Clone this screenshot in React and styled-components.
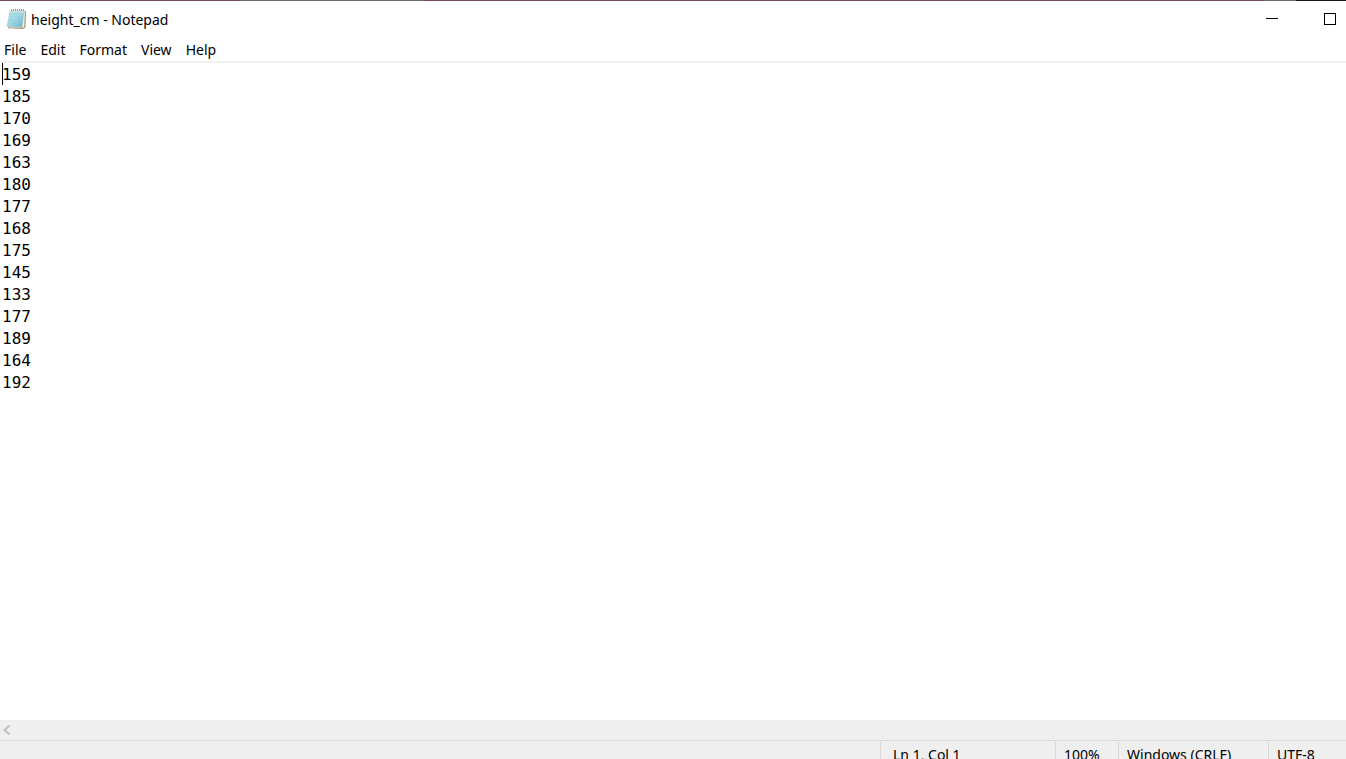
import React, { useState } from 'react';
import styled, { createGlobalStyle } from 'styled-components';

const MENUS = ['File', 'Edit', 'Format', 'View', 'Help'];

const HEIGHTS = [159, 185, 170, 169, 163, 180, 177, 168, 175, 145, 133, 177, 189, 164, 192];

const GlobalStyle = createGlobalStyle`
  * {
    box-sizing: border-box;
  }

  body {
    margin: 0;
    overflow: hidden;
  }
`;

const Window = styled.div`
  display: flex;
  flex-direction: column;
  height: 100vh;
  overflow: hidden;
  background: #fff;
  color: #000;
  font-family: 'Noto Sans', 'Open Sans', sans-serif;
  font-size: 14px;
`;

// Sliver of the desktop above the window
const DesktopEdge = styled.div`
  flex: none;
  display: flex;
  height: 1px;
  background: #7a4a60;
`;

const EdgePatch = styled.div`
  width: ${(props) => props.$width}px;
  margin-left: ${(props) => props.$offset};
  background: ${(props) => props.$color};
`;

const TitleBar = styled.header`
  flex: none;
  display: flex;
  align-items: center;
  height: 37px;
  padding-left: 6px;
  overflow: hidden;
`;

const Title = styled.h1`
  margin: 0 auto 0 4px;
  font-size: 14px;
  font-weight: 400;
  line-height: 20px;
`;

// The right side of the caption buttons runs past the edge of the screen
const Controls = styled.div`
  display: flex;
  align-self: flex-start;
  margin-right: -13px;
`;

const ControlButton = styled.button`
  display: flex;
  align-items: center;
  justify-content: center;
  width: 58px;
  height: 36px;
  padding: 0;
  border: 0;
  background: transparent;

  &:hover {
    background: #e5e5e5;
  }
`;

const MenuBar = styled.nav`
  flex: none;
  display: flex;
  height: 25px;
  padding-top: 1px;
  border-bottom: 2px solid #f0f0f0;
`;

const MenuButton = styled.button`
  height: 22px;
  padding: 0 7px;
  border: 0;
  background: transparent;
  color: inherit;
  font: inherit;
  line-height: 22px;

  &:first-child {
    padding-left: 4px;
  }

  &:hover {
    background: #e5f3ff;
  }
`;

const Editor = styled.main`
  flex: 1;
  display: flex;
  position: relative;
  min-height: 0;
`;

const TextArea = styled.textarea`
  flex: 1;
  padding: 1px 2px 0;
  border: 0;
  outline: 0;
  resize: none;
  overflow: hidden;
  background: #fff;
  color: #000;
  font-family: 'DejaVu Sans Mono', monospace;
  font-size: 16px;
  line-height: 22px;
  white-space: pre;
`;

const Caret = styled.span`
  position: absolute;
  top: 0;
  left: 2px;
  width: 1px;
  height: 22px;
  background: #000;
`;

const ScrollBar = styled.div`
  flex: none;
  display: flex;
  height: 20px;
  background: #efefef;
`;

const ScrollButton = styled.button`
  display: flex;
  align-items: center;
  width: 20px;
  height: 20px;
  padding: 0 0 0 3px;
  border: 0;
  background: transparent;
`;

// Only the top of the status bar is on the screen
const StatusBar = styled.footer`
  flex: none;
  display: flex;
  justify-content: flex-end;
  height: 19px;
  padding-top: 1px;
  border-top: 1px solid #d7d7d7;
  overflow: hidden;
  background: #efefef;
`;

const StatusCell = styled.div`
  width: ${(props) => props.$width}px;
  height: 26px;
  padding-left: ${(props) => props.$indent || 8}px;
  border-left: 1px solid #d7d7d7;
  line-height: 26px;
  white-space: nowrap;
`;

const NotepadIcon = () => (
  <svg width="21" height="22" viewBox="0 0 21 22" aria-hidden="true">
    <defs>
      <linearGradient id="page" x1="0" y1="0" x2="1" y2="1">
        <stop offset="0" stopColor="#c3e6ee" />
        <stop offset="0.5" stopColor="#a2d8e4" />
        <stop offset="1" stopColor="#62b2c8" />
      </linearGradient>
    </defs>
    <path d="M4 1.5 20 2 19.5 18.5 17.5 20 2 19.3z" fill="#a89a72" />
    <path d="M4.5 1.5 19 1.8 18.2 18.6 3 18.5z" fill="#e9eee9" />
    <path d="M4 1.5 18 1.5 16 18 1 17.5z" fill="url(#page)" stroke="#8fbcc8" strokeWidth="0.4" />
    <path d="M4 5h13.5M3.5 8h13.5M3 11h13.5M2.5 14h13.5" stroke="#86c6d4" strokeWidth="0.5" />
    <path d="M4 1.2 18.5 1.2 18.2 3.2 3.7 3.2z" fill="#d8e4e4" />
    <path d="M5.5 0v2.2M7.5 0v2.2M9.5 0v2.2M11.5 0v2.2M13.5 0v2.2M15.5 0v2.2M17.5 0v2.2" stroke="#7d898c" strokeWidth="0.8" />
  </svg>
);

const App = () => {
  const [text, setText] = useState(HEIGHTS.join('\n'));
  const [touched, setTouched] = useState(false);

  return (
    <>
      <GlobalStyle />
      <Window>
        <DesktopEdge>
          <EdgePatch $width={183} $offset="241px" $color="#6e6e6e" />
          <EdgePatch $width={31} $offset="auto" $color="#6e6e6e" />
          <EdgePatch $width={50} $offset="0" $color="#1c1624" />
        </DesktopEdge>

        <TitleBar>
          <NotepadIcon />
          <Title>height_cm - Notepad</Title>
          <Controls>
            <ControlButton aria-label="Minimize">
              <svg width="12" height="12" shapeRendering="crispEdges">
                <path d="M0 5.5h12" stroke="#000" />
              </svg>
            </ControlButton>
            <ControlButton aria-label="Maximize">
              <svg width="12" height="12" shapeRendering="crispEdges">
                <path d="M0.5 0.5h11v11h-11z" fill="none" stroke="#000" />
              </svg>
            </ControlButton>
          </Controls>
        </TitleBar>

        <MenuBar>
          {MENUS.map((menu) => (
            <MenuButton key={menu}>{menu}</MenuButton>
          ))}
        </MenuBar>

        <Editor>
          <TextArea
            aria-label="Text editor"
            spellCheck={false}
            value={text}
            onFocus={() => setTouched(true)}
            onChange={(e) => setText(e.target.value)}
          />
          {!touched && <Caret />}
        </Editor>

        <ScrollBar>
          <ScrollButton aria-label="Scroll left" disabled>
            <svg width="8" height="10" viewBox="0 0 8 10">
              <path d="M6.5 0.5 1.5 5l5 4.5" fill="none" stroke="#bdbdbd" strokeWidth="1.8" />
            </svg>
          </ScrollButton>
        </ScrollBar>

        <StatusBar>
          <StatusCell $width={175} $indent={12}>Ln 1, Col 1</StatusCell>
          <StatusCell $width={63}>100%</StatusCell>
          <StatusCell $width={150}>Windows (CRLF)</StatusCell>
          <StatusCell $width={78}>UTF-8</StatusCell>
        </StatusBar>
      </Window>
    </>
  );
};

export default App;
